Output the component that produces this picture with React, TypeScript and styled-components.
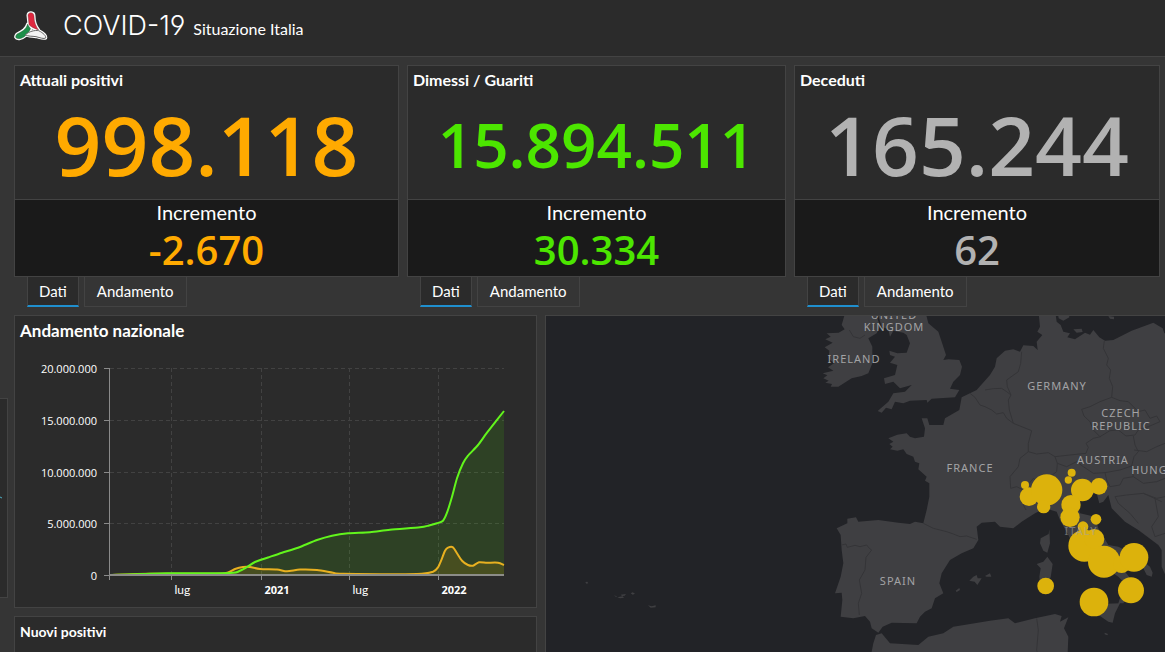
import React, { useState } from "react";
import styled, { createGlobalStyle } from "styled-components";

const GlobalStyle = createGlobalStyle`
  * { box-sizing: border-box; }
  body {
    margin: 0;
    background: #353535;
    color: #fff;
    font-family: Lato, "Open Sans", sans-serif;
  }
`;

const Page = styled.div`
  display: flex;
  flex-direction: column;
  height: 100vh;
  overflow: hidden;
`;

const Header = styled.header`
  display: flex;
  align-items: center;
  gap: 15px;
  flex: none;
  height: 57px;
  padding: 0 14px 5px;
  background: #2b2b2b;
  border-bottom: 1px solid #434343;
`;

const Title = styled.h1`
  display: flex;
  align-items: baseline;
  gap: 8px;
  margin: 0;
  font: 300 27px/40px Inter, sans-serif;
  font-feature-settings: "cv02", "cv03", "cv04";
`;

const Subtitle = styled.small`
  font: 400 16px/20px Lato, sans-serif;
`;

const Body = styled.div`
  display: flex;
  gap: 6px;
  flex: 1;
  min-height: 0;
`;

const SideStrip = styled.aside`
  flex: none;
  display: flex;
  flex-direction: column;
  width: 8px;
  padding: 341px 0 54px;
`;

const SidePanel = styled.div`
  display: flex;
  align-items: center;
  flex: 1;
  background: #2b2b2b;
  border: solid #434343;
  border-width: 1px 1px 1px 0;
`;

const Main = styled.main`
  display: flex;
  flex-direction: column;
  flex: 1;
  min-width: 0;
  padding-top: 8px;
  gap: 8px;
`;

const Stats = styled.div`
  display: grid;
  grid-template-columns: 385fr 379fr 366fr;
  gap: 8px;
  padding-right: 5px;
`;

const StatColumn = styled.section`
  min-width: 0;
`;

const StatCard = styled.div`
  border: 1px solid #434343;
  background: #2b2b2b;
`;

const PanelTitle = styled.h2<{ $size?: number; $tight?: boolean }>`
  margin: 0;
  padding: 0 5px;
  font-size: ${(p) => p.$size ?? 16}px;
  line-height: ${(p) => (p.$tight ? 28 : 30)}px;
  font-weight: 700;
`;

const Total = styled.p<{ $color: string; $long?: boolean }>`
  margin: 0;
  height: 105px;
  text-align: center;
  color: ${(p) => p.$color};
  font: 650 ${(p) => (p.$long ? 62 : 82)}px/100px "Open Sans", sans-serif;
`;

const Increment = styled.div`
  height: 77px;
  border-top: 1px solid #434343;
  background: #1a1a1a;
  text-align: center;
`;

const IncrementLabel = styled.h3`
  margin: 0;
  font-size: 20px;
  line-height: 25px;
  font-weight: 400;
`;

const IncrementValue = styled.p<{ $color: string }>`
  margin: 0;
  color: ${(p) => p.$color};
  font: 650 40px/50px "Open Sans", sans-serif;
`;

const Tabs = styled.div`
  display: flex;
  gap: 5px;
  padding-left: 13px;
`;

const Tab = styled.button<{ $active: boolean }>`
  height: 30px;
  padding: 0 ${(p) => (p.$active ? 11 : 12)}px ${(p) => (p.$active ? 0 : 2)}px;
  border: 1px solid #434343;
  border-top: 0;
  border-bottom: ${(p) => (p.$active ? "2px solid #1f8fce" : "1px solid #434343")};
  background: ${(p) => (p.$active ? "#2b2b2b" : "transparent")};
  color: #fff;
  font: 400 15px/26px Lato, sans-serif;
  cursor: pointer;
`;

const Lower = styled.div`
  display: grid;
  grid-template-columns: 523fr 620fr;
  gap: 8px;
  flex: 1;
  min-height: 0;
`;

const Charts = styled.div`
  display: flex;
  flex-direction: column;
  gap: 8px;
  min-width: 0;
`;

const Panel = styled.section<{ $grow?: boolean }>`
  flex: ${(p) => (p.$grow ? "1 0 auto" : "none")};
  border: 1px solid #434343;
  border-bottom-width: ${(p) => (p.$grow ? 0 : 1)}px;
  background: #2b2b2b;
`;

const Chart = styled.svg`
  display: block;
  width: 100%;
  padding-top: 4px;
`;

const AxisText = styled.text<{ $strong?: boolean; $month?: boolean }>`
  fill: #fff;
  font-family: ${(p) => (p.$month ? "Lato" : '"Open Sans"')}, sans-serif;
  font-size: ${(p) => (p.$month ? 12 : 11)}px;
  font-weight: ${(p) => (p.$strong ? 700 : 400)};
`;

const MapPanel = styled.section`
  min-width: 0;
  min-height: 0;
  border: solid #434343;
  border-width: 1px 0 0 1px;
  background: #222327;
`;

const MapCanvas = styled.svg`
  display: block;
  width: 100%;
  height: 100%;
`;

const MapLabel = styled.text`
  fill: #a3a3a5;
  font: 400 11px "Noto Sans", sans-serif;
  letter-spacing: 1px;
  text-anchor: middle;
`;

const Logo = () => (
  <svg width="34" height="32" viewBox="18 12 102 96" aria-hidden="true">
    <g stroke="#fff" strokeWidth="9" strokeLinejoin="round" fill="#fff">
      <path d="M60 28C60 17 78 17 78 30C78 48 84 62 92 72C80 68 68 62 63 56Z" />
      <path d="M59 54C62 62 66 66 68 68C58 86 48 96 34 98C22 99 20 92 27 84C44 76 54 70 59 54Z" />
      <path d="M52 86C64 76 80 72 92 74C106 81 115 90 113 96C108 100 96 95 84 92C72 90 60 92 52 86Z" />
    </g>
    <g strokeWidth="1" stroke="#4a3434" strokeLinejoin="round">
      <path fill="#e0283f" d="M60 28C60 17 78 17 78 30C78 48 84 62 92 72C80 68 68 62 63 56Z" />
      <path stroke="#27452f" fill="#1d8f4a" d="M59 54C62 62 66 66 68 68C58 86 48 96 34 98C22 99 20 92 27 84C44 76 54 70 59 54Z" />
      <path stroke="#666" strokeWidth="3" fill="#f3f3f3" d="M52 86C64 76 80 72 92 74C106 81 115 90 113 96C108 100 96 95 84 92C72 90 60 92 52 86Z" />
    </g>
  </svg>
);

interface Stat {
  title: string;
  total: string;
  increment: string;
  color: string;
}

const stats: Stat[] = [
  { title: "Attuali positivi", total: "998.118", increment: "-2.670", color: "#ffaa00" },
  { title: "Dimessi / Guariti", total: "15.894.511", increment: "30.334", color: "#4ce600" },
  { title: "Deceduti", total: "165.244", increment: "62", color: "#b2b2b2" },
];

const StatBlock = ({ title, total, increment, color }: Stat) => {
  const [active, setActive] = useState("Dati");
  return (
    <StatColumn>
      <StatCard>
        <PanelTitle $tight>{title}</PanelTitle>
        <Total $color={color} $long={total.length > 8}>{total}</Total>
        <Increment>
          <IncrementLabel>Incremento</IncrementLabel>
          <IncrementValue $color={color}>{increment}</IncrementValue>
        </Increment>
      </StatCard>
      <Tabs role="tablist">
        {["Dati", "Andamento"].map((name) => (
          <Tab key={name} role="tab" aria-selected={active === name} $active={active === name} onClick={() => setActive(name)}>
            {name}
          </Tab>
        ))}
      </Tabs>
    </StatColumn>
  );
};

type Point = [number, number];

const recovered: Point[] = [
  [95, 225], [128, 224], [152, 223.3], [215, 223], [225, 220.7], [232, 217], [240, 212], [253, 207.5],
  [267, 202.7], [283, 197.7], [302, 190], [317, 185.7], [333, 183.3], [355, 182.3], [375, 179.7],
  [405, 177.3], [414, 175.5], [422, 173.3], [428, 170.7], [432, 162.7], [437, 146.7], [442, 128.3],
  [448, 113.3], [453, 105.7], [463, 95], [472, 82.7], [489, 61],
];

const positive: Point[] = [
  [95, 225], [135, 223.7], [200, 223.7], [213, 222.5], [220, 219], [228, 217], [235, 217], [245, 219],
  [262, 219.5], [272, 221.3], [285, 219.6], [302, 220], [318, 222.7], [328, 223.8], [402, 224],
  [418, 221.7], [423, 217.3], [427, 208.3], [430, 200.7], [433, 197.6], [438, 197.3], [442, 203.3],
  [447, 210.7], [453, 215], [458, 215.7], [464, 212.3], [472, 212.7], [483, 212.7], [489, 215],
];

// Smooth curve through the points (Catmull-Rom converted to Bézier segments)
const curve = (pts: Point[]) =>
  pts.slice(1).reduce((d, p, i) => {
    const a = pts[i];
    const before = pts[i - 1] ?? a;
    const after = pts[i + 2] ?? p;
    const c1 = [a[0] + (p[0] - before[0]) / 8, a[1] + (p[1] - before[1]) / 8];
    const c2 = [p[0] - (after[0] - a[0]) / 8, p[1] - (after[1] - a[1]) / 8];
    return `${d}C${c1} ${c2} ${p}`;
  }, `M${pts[0]}`);

const yTicks: [string, number][] = [
  ["20.000.000", 18.5],
  ["15.000.000", 70.5],
  ["10.000.000", 122.5],
  ["5.000.000", 173.5],
  ["0", 225.5],
];
const xTicks: [string, number][] = [
  ["lug", 156.5],
  ["2021", 246.5],
  ["lug", 334.5],
  ["2022", 423.5],
];

const TrendChart = () => (
  <Chart viewBox="0 0 521 257" role="img" aria-label="Andamento nazionale">
    <g stroke="#424242" strokeDasharray="4 3">
      {yTicks.slice(0, 4).map(([label, y]) => (
        <line key={label} x1="95" x2="489" y1={y} y2={y} />
      ))}
      {xTicks.map(([label, x]) => (
        <line key={x} x1={x} x2={x} y1="18" y2="225" />
      ))}
    </g>
    <path d={`${curve(recovered)}V225H95Z`} fill="#4ce600" fillOpacity=".12" />
    <path d={`${curve(positive)}V225H95Z`} fill="#ffaa00" fillOpacity=".12" />
    <g stroke="#8a8a8a" fill="none">
      <path d="M94.5 18V230" />
      {yTicks.map(([label, y]) => (
        <line key={label} x1="89" x2="95" y1={y} y2={y} />
      ))}
      {xTicks.map(([label, x]) => (
        <line key={x} x1={x} x2={x} y1="225" y2="230" />
      ))}
    </g>
    <g fill="none" strokeWidth="2" strokeLinejoin="round">
      <path d={curve(positive)} stroke="#e8b020" />
      <path d={curve(recovered)} stroke="#62f51c" />
      <path d="M95 225H489" stroke="#8c8c88" />
    </g>
    {yTicks.map(([label, y]) => (
      <AxisText key={label} x="82" y={y + 4} textAnchor="end">{label}</AxisText>
    ))}
    {xTicks.map(([label, x]) => (
      <AxisText key={x} x={x + 3} y="244" $month={label === "lug"} $strong={label !== "lug"}>{label}</AxisText>
    ))}
  </Chart>
);

const land = [
  // Ireland
  "M108 0L95 45 104 58 86 68 50 70 62 80 46 88 68 98 44 112 58 122 56 145 72 160 54 172 70 182 38 190 52 196 40 205 56 212 46 218 66 222 62 230 85 230 125 205 155 198 175 190 187 160 187 110 175 85 200 70 210 50 195 0Z",
  // Great Britain
  "M200 0L215 50 235 58 240 80 250 62 280 68 290 75 300 100 290 128 262 130 238 122 240 135 255 140 240 158 262 165 255 195 222 205 225 222 250 215 270 235 305 225 285 245 250 250 235 275 203 303 215 308 228 293 245 298 255 275 280 280 300 272 350 270 352 278 365 266 435 262 448 240 420 236 430 215 450 195 456 170 448 150 415 148 400 150 408 135 395 95 385 65 355 40 345 0Z",
  // Continental Europe with Iberia, Italy and the Balkans
  "M685 0L690 50 682 65 697 75 680 95 683 120 670 108 640 106 630 125 610 118 585 122 560 145 555 170 540 195 500 240 455 262 448 300 405 325 400 345 358 345 352 325 335 325 345 355 342 380 315 385 300 380 290 370 262 374 235 385 250 395 238 402 248 410 240 418 262 422 280 418 290 432 310 440 315 455 328 460 325 478 350 500 345 512 358 520 358 560 350 600 340 640 315 635 300 642 265 638 205 630 145 635 138 622 112 626 112 640 80 655 92 675 95 720 100 760 92 800 75 850 95 848 97 870 92 920 130 925 165 918 180 935 185 955 205 968 218 950 245 938 320 940 330 920 345 905 365 895 375 865 400 850 388 820 395 790 420 750 455 730 490 715 505 690 500 650 515 638 555 635 570 650 610 655 635 635 675 610 705 595 740 605 750 630 775 675 790 705 845 745 895 780 925 800 940 815 935 850 925 880 940 880 965 845 965 810 945 785 950 770 995 765 1010 795 1025 800 1028 788 1020 770 975 735 925 710 895 705 865 655 855 620 810 610 800 570 835 555 860 550 868 580 880 575 895 555 905 595 945 635 985 660 1045 705 1055 720 1055 770 1066 795 1200 800 1200 70 1063 70 1058 55 1030 38 965 62 910 90 885 92 868 82 850 60 840 74 825 68 795 88 772 82 780 70 760 65 752 45 740 35 735 0Z",
  // Sicily, Sardinia, Corsica
  "M815 880L832 900 870 918 895 935 908 938 915 910 930 880 870 882Z",
  "M680 762L692 775 688 800 690 820 705 830 722 802 728 762 712 740 700 755Z",
  "M718 658L716 672 692 685 690 700 700 722 712 728 720 700Z",
  // North Africa
  "M170 1100L190 1000 198 975 215 970 240 1000 325 1005 355 980 400 970 430 950 540 932 595 925 615 940 675 925 735 912 755 918 750 935 775 922 762 955 775 980 770 1100Z",
  // Balearics and Malta
  "M478 812L490 800 500 795 503 805 515 805 502 825 494 815Z",
  "M437 842L448 834 450 840 440 846Z",
  "M525 798L540 790 544 800 530 800Z",
  "M884 968L894 972 892 976 884 973Z",
  // Danish and Baltic islands
  "M742 0L746 25 760 32 778 22 776 0Z",
  "M790 58L815 56 818 66 800 68Z",
  "M895 18L912 20 912 28 900 26Z",
  // Azores
  "M-674 816L-668 815 -665 820 -671 821Z",
  "M-588 856L-580 859 -581 862ZM-578 862L-562 859 -558 863 -570 865ZM-568 854L-552 852 -556 857 -564 858Z",
  "M-538 850L-532 847 -525 851 -532 854Z",
  "M-486 886L-475 889 -463 886 -463 892 -478 893Z",
];

const borders = [
  "M635 125L632 160 625 185 590 210 592 230 603 255 595 270 598 300 610 340",
  "M525 240L550 236 575 235 590 245 603 255M480 250L495 262 510 285 525 290 545 300 560 312 580 308 590 325 610 340 665 362 655 400 655 425",
  "M655 425L680 432 715 428 735 440 780 435 828 430 835 412 828 400 850 385 872 380",
  "M883 92L880 115 895 145 890 165 902 180 898 205 908 230 905 262",
  "M905 262L870 275 840 290 815 298 822 318 840 335 850 360 870 380 900 362 925 360 948 378 975 375 985 360 1015 350 1050 335 1040 318 1020 325 1005 300 985 305 955 275 930 272 905 262",
  "M735 440L742 460 770 470 800 455 820 470 850 490 885 488 930 480 965 468 972 440 985 425 975 405 970 378",
  "M972 420L1010 425 1040 410 1065 400",
  "M655 425L630 445 625 470 600 500 602 535 620 530M620 530L640 540 635 575 648 600",
  "M742 460L740 485 720 500 700 492 690 520 670 505 645 535",
  "M885 488L890 510 900 530M900 530L930 525 940 505 970 500 965 468M970 500L1000 520 1040 515 1065 505",
  "M1055 575L1000 550 950 555 915 560 925 580 960 610 985 640M1000 550L1040 565 1065 560M1035 565L1045 620 1025 650 1035 680 1065 670",
  "M340 640L370 655 410 665 430 672 450 680 470 678 500 688",
  "M95 705L108 702 112 712 135 706 150 710 170 705 178 715 185 720 168 742 165 780 148 810 155 850 145 880 148 915",
  "M680 925L685 960 680 1020 690 1060",
  "M118 60L130 80 150 85 165 75",
];

// Case counts by region, centre and radius on the map
const regions: [number, number, number][] = [
  [645, 525, 12], [657, 560, 28], [710, 540, 47], [701, 590, 20], [785, 488, 12],
  [775, 510, 11], [817, 540, 34], [867, 529, 25], [783, 584, 29], [780, 622, 29],
  [858, 628, 16], [819, 650, 16], [823, 707, 48], [853, 687, 30], [882, 755, 48],
  [935, 763, 26], [972, 742, 43], [963, 841, 39], [852, 876, 43], [707, 828, 25],
];

const labels: [string, number, number][] = [
  ["UNITED", 348, 3],
  ["KINGDOM", 348, 15],
  ["IRELAND", 308, 47],
  ["GERMANY", 511, 74],
  ["CZECH", 575, 101],
  ["REPUBLIC", 575, 114],
  ["AUSTRIA", 557, 148],
  ["FRANCE", 424, 156],
  ["SPAIN", 352, 269],
  ["HUNGARY", 615, 158],
];

const EuropeMap = () => (
  <MapCanvas viewBox="0 0 619 336" preserveAspectRatio="xMinYMin slice" role="img" aria-label="Mappa dei casi per regione">
    <g transform="translate(264 -6) scale(.33333)">
      <path d={land.join("")} fill="#3f3f42" />
      <path d={borders.join("")} fill="none" stroke="#343437" strokeWidth="3" strokeLinejoin="round" />
      <g fill="#dcb20c">
        {regions.map(([x, y, r]) => (
          <circle key={`${x}-${y}`} cx={x} cy={y} r={r} />
        ))}
      </g>
    </g>
    {labels.map(([name, x, y]) => (
      <MapLabel key={name} x={x} y={y}>{name}</MapLabel>
    ))}
    <MapLabel x="535" y="219" opacity=".6">ITALY</MapLabel>
  </MapCanvas>
);

export default function App() {
  return (
    <Page>
      <GlobalStyle />
      <Header>
        <Logo />
        <Title>
          COVID-19 <Subtitle>Situazione Italia</Subtitle>
        </Title>
      </Header>
      <Body>
        <SideStrip>
          <SidePanel>
            <svg width="2" height="4" aria-hidden="true">
              <path d="M0 1L2 2" stroke="#4fb0c6" />
            </svg>
          </SidePanel>
        </SideStrip>
        <Main>
          <Stats>
            {stats.map((s) => (
              <StatBlock key={s.title} {...s} />
            ))}
          </Stats>
          <Lower>
            <Charts>
              <Panel>
                <PanelTitle $size={17}>Andamento nazionale</PanelTitle>
                <TrendChart />
              </Panel>
              <Panel $grow>
                <PanelTitle $size={14}>Nuovi positivi</PanelTitle>
              </Panel>
            </Charts>
            <MapPanel>
              <EuropeMap />
            </MapPanel>
          </Lower>
        </Main>
      </Body>
    </Page>
  );
}
